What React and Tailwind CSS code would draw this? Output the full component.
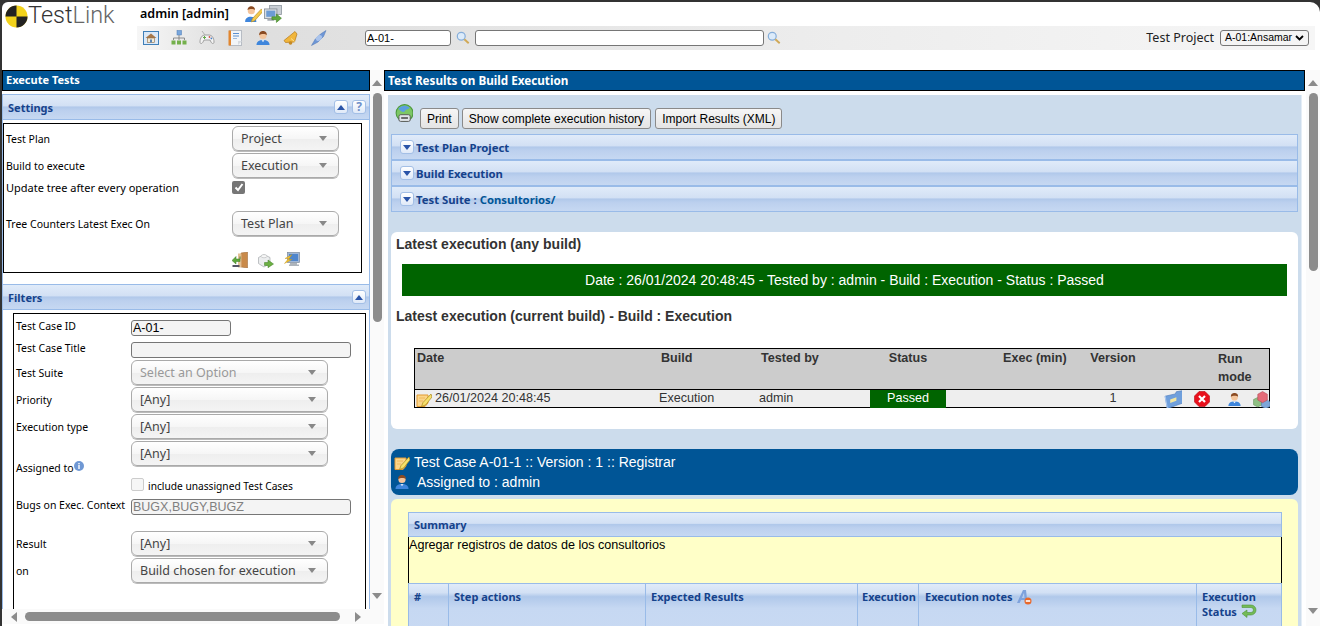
import React from "react";

const tahoma = "font-['Noto_Sans',sans-serif]";
const extBar =
  "border border-[#99bbe8] bg-[linear-gradient(to_bottom,#e0ebf9_0%,#d2e0f4_45%,#b0c8ea_50%,#bcd0ee_65%,#c6d8f2_100%)] text-[#15428b] font-bold";

// ---- icons, small pixel style drawings ----
const Svg = ({ s = 16, children, className = "" }) => (
  <svg width={s} height={s} viewBox="0 0 16 16" className={"shrink-0 " + className}>
    {children}
  </svg>
);

const HomeIcon = () => (
  <Svg>
    <rect x="0.5" y="1.5" width="15" height="13" fill="#dbe9f8" stroke="#3f7fb8" />
    <path d="M2.5 8 8 3.5 13.5 8z" fill="#a8794a" />
    <rect x="4.5" y="8" width="7" height="4.5" fill="#f3ead6" stroke="#8a6a45" strokeWidth="0.6" />
    <rect x="7" y="9.5" width="2" height="3" fill="#5b86b4" />
  </Svg>
);
const TreeIcon = () => (
  <Svg>
    <rect x="6" y="0.5" width="4.5" height="4.5" fill="#7aa7dc" stroke="#4a7ab5" strokeWidth="0.5" />
    <path d="M8 5v3M2.5 10V8h11v2M8 8v2" stroke="#777" fill="none" strokeWidth="0.8" />
    <rect x="0.5" y="10.5" width="4" height="4" fill="#74b04c" />
    <rect x="6" y="10.5" width="4" height="4" fill="#74b04c" />
    <rect x="11.5" y="10.5" width="4" height="4" fill="#74b04c" />
  </Svg>
);
const GamepadIcon = () => (
  <Svg>
    <path d="M1 12c0-4 2-7 5-7h4c3 0 5 3 5 7 0 2-2 2-3 0l-1-2H5l-1 2c-1 2-3 2-3 0z" fill="#f4f4f4" stroke="#8d8d8d" strokeWidth="0.8" />
    <path d="M4 7.5h3M5.5 6v3" stroke="#63a84a" strokeWidth="1" />
    <circle cx="10.5" cy="7" r="0.9" fill="#d9534f" />
    <circle cx="12.4" cy="8.4" r="0.9" fill="#4a7fc4" />
    <path d="M3 1l3 4" stroke="#b0b0b0" />
  </Svg>
);
const NotebookIcon = () => (
  <Svg>
    <rect x="2.5" y="0.5" width="12" height="15" fill="#f2f5f8" stroke="#b7bcc4" />
    <rect x="1.5" y="0.5" width="2.5" height="15" fill="#e2862f" />
    <path d="M6 3.5h6M6 6h6" stroke="#5b90d0" strokeWidth="1.2" />
    <path d="M6 8.5h4" stroke="#9fbbdc" />
    <path d="M15 11l-4 4v-4z" fill="#d7dbe0" />
  </Svg>
);
const UserIcon = ({ s = 16 }) => (
  <Svg s={s}>
    <path d="M1.5 15c0-3.5 2.5-5 6.5-5s6.5 1.5 6.500 5z" fill="#3f86dc" />
    <circle cx="8" cy="5.500" r="3.600" fill="#f4c59c" />
    <path d="M4.200 5.200C4 2 6 1 8 1s4 1 3.800 4.200C10.500 3.700 6 3.700 4.200 5.200z" fill="#8a4a22" />
    <path d="M6.500 10.200 8 12l1.500-1.800z" fill="#fff" />
  </Svg>
);
const BellIcon = () => (
  <Svg>
    <path d="M12 1.500 14 4 11.500 12 2.500 12.500 1 10.500 6.500 6z" fill="#f1b63c" stroke="#b67a1a" strokeWidth="0.7" />
    <path d="M8 8.500l3.500 3" stroke="#fbe39a" />
    <circle cx="7.500" cy="13" r="1.800" fill="#c68a26" />
  </Svg>
);
const ConnectorIcon = () => (
  <Svg>
    <path d="M0.500 15.500 4 9.500 9.500 4 15 0.500 12.500 6.500 7 12z" fill="#6f97d6" stroke="#4c74b5" strokeWidth="0.5" />
    <ellipse cx="8" cy="8" rx="3.400" ry="2.400" transform="rotate(-45 8 8)" fill="#a9c3ec" />
  </Svg>
);
const SearchIcon = () => (
  <Svg s={14}>
    <circle cx="6" cy="6" r="4.500" fill="#dcebfa" stroke="#86aeda" strokeWidth="1.400" />
    <path d="M9.500 9.500 14.500 14" stroke="#d0a957" strokeWidth="2.200" />
  </Svg>
);
const UserEditIcon = () => (
  <Svg s={18}>
    <path d="M1 15c0-3 2-4.500 5-4.500s5 1.500 5 4.500z" fill="#3f86dc" />
    <circle cx="6.500" cy="5" r="3.200" fill="#f4c59c" />
    <path d="M3.200 4.500C3 2 5 1 6.500 1s3.500 1 3.300 3.500C8.500 3.200 5 3.200 3.200 4.500z" fill="#8a4a22" />
    <path d="M15.500 3.500 7.500 12 6.500 15l3-1 7.500-8.500z" fill="#f2c94c" stroke="#b58a2a" strokeWidth="0.6" />
  </Svg>
);
const ComputerArrowIcon = () => (
  <Svg s={18}>
    <rect x="5" y="0.500" width="10.500" height="8" fill="#c9ced4" stroke="#8a929b" strokeWidth="0.7" />
    <rect x="0.500" y="3.500" width="11" height="8.500" fill="#d8dde2" stroke="#7f8790" strokeWidth="0.7" />
    <rect x="2" y="5" width="8" height="5.500" fill="#6c9bd4" />
    <rect x="3" y="12" width="6" height="2" fill="#a5abb2" />
    <path d="M7 10.500h4V8l4.500 3.700L11 15.500V13H7z" fill="#5fa83c" stroke="#3f7d25" strokeWidth="0.5" />
  </Svg>
);
const DoorIcon = () => (
  <Svg>
    <path d="M9 1 15.500 0v16L9 15z" fill="#c98a4a" stroke="#94602c" strokeWidth="0.5" />
    <rect x="6" y="1.500" width="3.500" height="14" fill="#e4c094" />
    <path d="M8 5v2.500H4V5L0 9l4 3.500V10h4z" transform="translate(0 -0.500)" fill="#5fa83c" stroke="#3f7d25" strokeWidth="0.5" />
    <rect x="0.500" y="13" width="7" height="2" fill="#556" />
  </Svg>
);
const LegoArrowIcon = () => (
  <Svg>
    <path d="M0.500 5.500 6 2.500l6 3v6l-6 3.500-5.500-3.500z" fill="#eceeef" stroke="#a6aaae" strokeWidth="0.7" />
    <ellipse cx="6" cy="4.200" rx="3" ry="1.600" fill="#f8f8f8" stroke="#b5b8bb" strokeWidth="0.6" />
    <path d="M6.500 10.500H10V8l5.500 4-5.500 3.700V13.500H6.500z" fill="#6cb043" stroke="#3f7d25" strokeWidth="0.5" />
  </Svg>
);
const MonitorBoltIcon = () => (
  <Svg>
    <rect x="3.500" y="0.500" width="12" height="10" fill="#9fb7d8" stroke="#7d8a9a" strokeWidth="0.7" />
    <rect x="5" y="2" width="9" height="7" fill="#4f86cc" />
    <path d="M6 11h7v1.500h2V14H5v-1.500h1z" fill="#adb4bb" />
    <path d="M8 2.500 1 6.500h3.500L0.500 11.500 8 7.500H4.500z" fill="#f2c12e" stroke="#c08f12" strokeWidth="0.4" />
  </Svg>
);
const GlobeIcon = () => (
  <Svg s={18}>
    <circle cx="8.500" cy="8" r="7.500" fill="#7cc765" stroke="#4d9a3d" />
    <path d="M3 4c3-3 7-3 10-1-1 2-3 1-4 3S5 7 3 4z" fill="#5b9fde" />
    <rect x="3.500" y="9.500" width="10" height="6" rx="1.500" fill="#dfe4e8" stroke="#555" strokeWidth="0.8" />
    <path d="M5.500 12.500h6" stroke="#444" strokeWidth="1.400" />
  </Svg>
);
const ExtBtn = ({ dir = "up", size = 14 }) => (
  <span
    style={{ width: size, height: size }}
    className="flex shrink-0 items-center justify-center rounded-[3px] border border-[#a3bfe6] bg-[linear-gradient(to_bottom,#ffffff,#dfe9f8)]"
  >
    <svg width="8" height="5" viewBox="0 0 8 5">
      <path d={dir === "up" ? "M0 5 4 0l4 5z" : "M0 0h8L4 5z"} fill="#2a54a8" />
    </svg>
  </span>
);
const InfoIcon = () => (
  <svg width="10" height="10" viewBox="0 0 10 10" className="mb-[5px] shrink-0">
    <circle cx="5" cy="5" r="5" fill="#6f98d4" />
    <rect x="4.300" y="4" width="1.400" height="4" fill="#fff" />
    <rect x="4.300" y="2" width="1.400" height="1.300" fill="#fff" />
  </svg>
);
const NoteEditIcon = ({ s = 16 }) => (
  <Svg s={s}>
    <path d="M1 4h11v8l-3 3.500H1z" fill="#fbd58a" stroke="#e29b33" />
    <path d="M3 7h6M3 10h4" stroke="#f0b85a" />
    <path d="M15 3 7 11.500 5.500 15.500 9.500 14 16 6z" fill="#f7e06a" stroke="#a8871c" strokeWidth="0.7" />
  </Svg>
);
const FolderIcon = () => (
  <Svg s={18}>
    <path d="M1 5.500 10 3.500 11 1.500 17 0.500 17 11.500 3 16.500z" fill="#6f9fdc" stroke="#4d7dbd" strokeWidth="0.6" />
    <path d="M5.500 8.500 11 6.500v3L5.500 11.500z" fill="#f2e6a0" />
    <path d="M1 5.500 3 16.500" stroke="#a8c6ee" />
  </Svg>
);
const RedXIcon = () => (
  <Svg>
    <path d="M5 0.500h6L15.500 5v6L11 15.500H5L0.500 11V5z" fill="#e8101c" stroke="#b80a12" strokeWidth="0.6" />
    <path d="M5 5l6 6M11 5l-6 6" stroke="#fff" strokeWidth="2.200" />
  </Svg>
);
const CubesIcon = () => (
  <Svg s={17}>
    <path d="M0.500 8 4.500 6l4 2v5l-4 2-4-2z" fill="#8fbf83" stroke="#5f8f57" strokeWidth="0.5" />
    <path d="M8 10l4-2 4 2v4.500l-4 2-4-2z" fill="#7ea6d8" stroke="#527cb0" strokeWidth="0.5" />
    <path d="M4.500 3 9 0.500 13.500 3v5.500L9 11 4.500 8.500z" fill="#e46b78" stroke="#b0444f" strokeWidth="0.5" />
  </Svg>
);
const ItalicMinusIcon = () => (
  <Svg>
    <path d="M1 14 7 1h3l1.500 13H9l-.3-3H5l-1.300 3zM5.800 9h2.700L8 4z" fill="#7ea2dc" />
    <circle cx="12" cy="12" r="3.500" fill="#e8682a" />
    <rect x="9.800" y="11.200" width="4.400" height="1.600" fill="#fff" />
  </Svg>
);
const ReturnIcon = () => (
  <Svg>
    <path d="M1 2h9a4.500 4.500 0 0 1 0 10H6v2.500L1 10.500 6 7v2.500h4a2 2 0 0 0 0-5H1z" fill="#74bb57" stroke="#4d9437" strokeWidth="0.6" />
  </Svg>
);
const LogoIcon = () => (
  <svg width="23" height="23" viewBox="0 0 24 24" className="shrink-0">
    <circle cx="12" cy="12" r="11.500" fill="#f2d21b" />
    <path d="M12 .5A11.500 11.500 0 0 0 .5 12H12zM12 12v11.500A11.500 11.500 0 0 0 23.500 12z" fill="#222" />
  </svg>
);

// ---- form bits ----
const Chosen = ({ w, label, disabled, className = "" }) => (
  <div
    style={{ width: w }}
    className={
      "flex h-[25px] shrink-0 items-center justify-between rounded-[6px] border border-[#aaaaaa] bg-[linear-gradient(to_bottom,#ffffff_0%,#f6f6f6_50%,#eeeeee_52%,#f4f4f4_100%)] pl-[8px] pr-[11px] text-[12.500px] shadow-[0_1px_0_#bbb] " +
      tahoma + " " + (disabled ? "text-[#999999] " : "text-[#444444] ") + className
    }
  >
    <span className="whitespace-nowrap pt-[1px]">{label}</span>
    <svg width="8" height="5" viewBox="0 0 8 5">
      <path d="M0 0h8L4 5z" fill="#888" />
    </svg>
  </div>
);
const TextBox = ({ w, value, muted, className = "" }) => (
  <div
    style={{ width: w }}
    className={
      "h-[16px] shrink-0 rounded-[3px] border border-[#767676] bg-[#f4f4f4] pl-[1px] font-['Liberation_Sans',sans-serif] leading-[14px] " +
      (muted ? "text-[#808080] " : "text-black ") + className
    }
  >
    {value}
  </div>
);
const Row = ({ label, children, className = "", labelClass = "pt-[2px]", w = 118 }) => (
  <div className={"flex items-center " + className}>
    <div style={{ width: w }} className={"flex shrink-0 items-end whitespace-nowrap " + labelClass}>
      {label}
    </div>
    {children}
  </div>
);
const Btn = ({ children, className = "" }) => (
  <button className={"h-[21px] rounded-[3px] border border-[#8a8a8a] bg-[linear-gradient(to_bottom,#f6f6f6,#e4e4e4)] px-[6px] text-[12px] leading-[18px] text-black " + className}>
    {children}
  </button>
);
const Arrow = ({ dir }) => {
  const d = { up: "M0 6 5 0l5 6z", down: "M0 0h10L5 6z", left: "M6 0v10L0 5z", right: "M0 0v10l6-5z" }[dir];
  const box = dir === "up" || dir === "down" ? [10, 6] : [6, 10];
  return (
    <svg width={box[0]} height={box[1]} viewBox={`0 0 ${box[0]} ${box[1]}`} className="shrink-0">
      <path d={d} fill="#8c8c8c" />
    </svg>
  );
};
const VScroll = ({ thumb, downAt }) => (
  <div className="flex h-full w-[14px] shrink-0 flex-col items-center bg-[#fafafa]">
    <div className="mt-[10px]"><Arrow dir="up" /></div>
    <div style={{ height: thumb }} className="mt-[7px] w-[9px] shrink-0 rounded-[5px] bg-[#8c8c8c]" />
    <div style={{ marginTop: downAt }}><Arrow dir="down" /></div>
  </div>
);
const Accordion = ({ children }) => (
  <div className={"flex h-[26px] items-center gap-[2px] pl-[8px] text-[11.300px] " + extBar + " " + tahoma}>
    <ExtBtn dir="down" />
    <span className="pt-[3px]">{children}</span>
  </div>
);
const StepHead = ({ w, children, className = "" }) => (
  <div style={{ width: w }} className={"shrink-0 border-r border-[#99bbe8] pl-[5px] pt-[5px] " + className}>
    {children}
  </div>
);

const tableCols = "grid grid-cols-[244px_100px_111px_76px_134px_66px_70px_53px]";

export default function App() {
  return (
    <div className="h-[626px] w-[1320px] overflow-hidden bg-[#333333] pl-[2px] pt-[2px]">
      <div className="flex h-[624px] flex-col overflow-hidden rounded-tl-[6px] rounded-tr-[10px] bg-white">
        {/* top header */}
        <header className="flex h-[68px] shrink-0">
          <div className="flex h-[25px] w-[135px] shrink-0 items-center pl-[3px] pt-[3px]">
            <LogoIcon />
            <span className="whitespace-nowrap font-['Roboto',sans-serif] text-[23.500px] font-light leading-none text-[#333333]">
              Test<span className="text-[#666666]">Link</span>
            </span>
          </div>
          <div className="flex flex-col">
            <div className={"flex h-[24px] items-center pl-[3px] " + tahoma}>
              <span className="w-[104px] text-[12.500px] font-semibold text-black">admin [admin]</span>
              <UserEditIcon />
              <span className="ml-[2px]"><ComputerArrowIcon /></span>
            </div>
            <div className="flex h-[24px] w-[1178px] items-center bg-[linear-gradient(to_right,#f6f6f6,#dedede_8%,#ededed_60%,#f6f6f6)] pl-[6px]">
              <div className="flex gap-[12px]">
                <HomeIcon /><TreeIcon /><GamepadIcon /><NotebookIcon /><UserIcon /><BellIcon /><ConnectorIcon />
              </div>
              <TextBox w={86} value="A-01-" className="ml-[38px] bg-white text-[11px]" />
              <span className="ml-[5px]"><SearchIcon /></span>
              <TextBox w={289} value="" className="ml-[5px] bg-white" />
              <span className="ml-[3px]"><SearchIcon /></span>
              <span className={"ml-auto text-[12.500px] text-[#222222] " + tahoma}>Test Project</span>
              <div className="ml-[6px] mr-[6px] flex h-[16px] w-[89px] items-center justify-between whitespace-nowrap rounded-[3px] border border-[#767676] bg-[#f4f4f4] px-[4px] font-['Liberation_Sans',sans-serif] text-[10.500px] text-black">
                <span>A-01:Ansamar</span>
                <svg width="9" height="6" viewBox="0 0 9 6" className="shrink-0">
                  <path d="M1 1l3.500 3.500L8 1" fill="none" stroke="#000" strokeWidth="1.800" />
                </svg>
              </div>
            </div>
          </div>
        </header>

        <div className="flex min-h-0 flex-1">
          {/* left pane */}
          <aside className="flex w-[382px] shrink-0 flex-col">
            <div className="flex h-[539px] shrink-0">
              <div className={"flex w-[368px] shrink-0 flex-col overflow-hidden text-[10.500px] text-black " + tahoma}>
                <div className="flex h-[21px] shrink-0 items-center border border-black bg-[#005596] pl-[3px] text-[11px] font-bold text-white">
                  Execute Tests
                </div>
                <div className={"mt-[3px] flex h-[26px] shrink-0 items-center justify-between pl-[5px] pr-[3px] text-[11px] " + extBar}>
                  <span className="pt-[3px]">Settings</span>
                  <span className="flex gap-[4px]">
                    <ExtBtn dir="up" />
                    <span className="flex h-[14px] w-[14px] items-center justify-center rounded-[3px] border border-[#a3bfe6] bg-[linear-gradient(to_bottom,#ffffff,#dfe9f8)] text-[12px] font-bold leading-none text-[#6f8fc8]">?</span>
                  </span>
                </div>
                {/* settings body */}
                <div className="h-[164px] shrink-0 border-x border-[#99bbe8] pt-[3px]">
                  <div className="flex h-[150px] w-[359px] flex-col border border-black pl-[2px]">
                    <Row label="Test Plan" w={226} className="mt-[2px]"><Chosen w={107} label="Project" /></Row>
                    <Row label="Build to execute" w={226} className="mt-[2px]"><Chosen w={107} label="Execution" /></Row>
                    <Row label={<span className="text-[11px]">Update tree after every operation</span>} labelClass="pt-[3px]" w={226} className="mt-[2px] h-[14px]">
                      <span className="flex h-[13px] w-[13px] items-center justify-center rounded-[2px] bg-[#767676]">
                        <svg width="10" height="10" viewBox="0 0 10 10">
                          <path d="M1.500 5.500 4 8l4.500-6" fill="none" stroke="#fff" strokeWidth="2" />
                        </svg>
                      </span>
                    </Row>
                    <Row label="Tree Counters Latest Exec On" w={226} className="mt-[17px]"><Chosen w={107} label="Test Plan" /></Row>
                    <div className="ml-[226px] mt-[16px] flex gap-[10px]">
                      <DoorIcon /><LegoArrowIcon /><MonitorBoltIcon />
                    </div>
                  </div>
                </div>
                <div className={"flex h-[26px] shrink-0 items-center justify-between pl-[5px] pr-[3px] text-[11px] " + extBar}>
                  <span className="pt-[3px]">Filters</span>
                  <ExtBtn dir="up" />
                </div>
                {/* filters body */}
                <div className="min-h-0 flex-1 border-x border-[#99bbe8] pt-[3px]">
                  <div className="ml-[10px] h-[400px] w-[353px] border border-black pl-[2px]">
                    <Row label="Test Case ID" labelClass="pb-[3px]" w={115} className="mt-[6px] h-[16px]"><TextBox w={100} value="A-01-" className="text-[12.500px]" /></Row>
                    <Row label="Test Case Title" labelClass="pb-[3px]" w={115} className="mt-[6px] h-[16px]"><TextBox w={220} value="" /></Row>
                    <Row label="Test Suite" w={115} className="mt-[2px]"><Chosen w={197} label="Select an Option" disabled /></Row>
                    <Row label="Priority" w={115} className="mt-[2px]"><Chosen w={197} label="[Any]" /></Row>
                    <Row label="Execution type" w={115} className="mt-[2px]"><Chosen w={197} label="[Any]" /></Row>
                    <Row label={<>Assigned to<InfoIcon /></>} labelClass="translate-y-[15px]" w={115} className="mt-[2px]">
                      <Chosen w={197} label="[Any]" />
                    </Row>
                    <div className="ml-[115px] mt-[12px] flex h-[13px] items-center gap-[4px]">
                      <span className="h-[13px] w-[13px] rounded-[2px] border border-[#cccccc] bg-[#f6f6f6]" />
                      <span className="pt-[5px] text-[10.200px]">include unassigned Test Cases</span>
                    </div>
                    <Row label="Bugs on Exec. Context" labelClass="pb-[3px]" w={115} className="mt-[8px] h-[16px]"><TextBox w={220} value="BUGX,BUGY,BUGZ" muted className="text-[12.500px]" /></Row>
                    <Row label="Result" w={115} className="mt-[16px]"><Chosen w={197} label="[Any]" /></Row>
                    <Row label="on" w={115} className="mt-[2px]"><Chosen w={197} label="Build chosen for execution" /></Row>
                  </div>
                </div>
              </div>
              <VScroll thumb={229} downAt={271} />
            </div>
            <div className="flex h-[15px] shrink-0 items-center bg-[#fafafa]">
              <span className="ml-[9px]"><Arrow dir="left" /></span>
              <div className="ml-[8px] h-[9px] w-[315px] rounded-[5px] bg-[#8c8c8c]" />
              <span className="ml-[15px]"><Arrow dir="right" /></span>
            </div>
          </aside>

          {/* right pane */}
          <main className="flex min-w-0 flex-1">
            <div className="flex w-[922px] shrink-0 flex-col overflow-hidden font-['Liberation_Sans',sans-serif]">
              <div className={"mr-[1px] flex h-[21px] shrink-0 items-center border border-black bg-[#005596] pl-[3px] text-[11.700px] font-bold text-white " + tahoma}>
                Test Results on Build Execution
              </div>
              <div className="mt-[4px] ml-[4px] w-[914px] flex-1 border-r border-[#e4edf6] bg-[#ccdcec] px-[3px] pt-[9px]">
                <div className="flex h-[30px] items-start pl-[4px]">
                  <GlobeIcon />
                  <div className="ml-[7px] mt-[4px] flex gap-[3px]">
                    <Btn>Print</Btn>
                    <Btn>Show complete execution history</Btn>
                    <Btn className="ml-[1px]">Import Results (XML)</Btn>
                  </div>
                </div>
                <Accordion>Test Plan Project</Accordion>
                <Accordion>Build Execution</Accordion>
                <Accordion>
                  Test Suite : <span className="text-[#005596]">Consultorios/</span>
                </Accordion>

                {/* latest execution card */}
                <section className="mt-[20px] h-[197px] rounded-[6px] bg-white px-[5px] pt-[3px] text-[#333333]">
                  <h2 className="h-[25px] text-[14px] font-bold leading-[18px]">Latest execution (any build)</h2>
                  <div className="ml-[6px] mt-[4px] flex h-[32px] w-[885px] items-center justify-center bg-[#006400] text-[14px] text-white">
                    Date : 26/01/2024 20:48:45 - Tested by : admin - Build : Execution - Status : Passed
                  </div>
                  <h2 className="mt-[11px] text-[14px] font-bold leading-[18px]">Latest execution (current build) - Build : Execution</h2>
                  <div className="ml-[18px] mt-[23px] w-[856px] border border-black text-[12.600px]">
                    <div className={tableCols + " h-[41px] border-b border-black bg-[#cccccc] pt-[1px] font-bold leading-[16px]"}>
                      <span className="pl-[2px]">Date</span>
                      <span className="pl-[2px]">Build</span>
                      <span className="pl-[2px]">Tested by</span>
                      <span className="text-center">Status</span>
                      <span className="pl-[57px]">Exec (min)</span>
                      <span className="text-center">Version</span>
                      <span />
                      <span className="pl-[2px] leading-[18px]">Run<br />mode</span>
                    </div>
                    <div className={tableCols + " h-[17px] items-center bg-[#eeeeee] leading-[16px]"}>
                      <span className="flex items-center gap-[3px] pl-[1px]"><NoteEditIcon /><span className="-mt-[2px]">26/01/2024 20:48:45</span></span>
                      <span className="pb-[2px]">Execution</span>
                      <span className="pb-[2px]">admin</span>
                      <span className="flex h-full items-center justify-center bg-[#006400] pb-[2px] text-white">Passed</span>
                      <span />
                      <span className="pb-[2px] text-center">1</span>
                      <span className="flex items-center gap-[12px] pl-[18px]"><FolderIcon /><RedXIcon /></span>
                      <span className="flex items-center gap-[11px] pl-[11px]"><UserIcon s={15} /><CubesIcon /></span>
                    </div>
                  </div>
                </section>

                {/* test case */}
                <section className="mt-[20px] flex h-[46px] flex-col justify-center rounded-[8px] bg-[#005596] pl-[3px] text-[14px] leading-[20px] text-white">
                  <div className="flex items-center gap-[4px]"><NoteEditIcon />Test Case A-01-1 :: Version : 1 :: Registrar</div>
                  <div className="flex items-center gap-[7px]"><UserIcon />Assigned to : admin</div>
                </section>
                <section className="mt-[4px] rounded-t-[6px] bg-[#ffffc8] pb-[40px] pl-[17px] pr-[16px] pt-[13px]">
                  <div className={"flex h-[25px] items-center pl-[5px] text-[11px] " + extBar + " " + tahoma}>
                    <span className="pt-[1px]">Summary</span>
                  </div>
                  <div className="h-[46px] border-x border-black pt-[1px] text-[12.600px] leading-[14px] text-black">
                    Agregar registros de datos de los consultorios
                  </div>
                  <div className={"flex h-[60px] border border-[#99bbe8] bg-[linear-gradient(to_bottom,#e0ebf9_0%,#d2e0f4_15%,#b0c8ea_22%,#c6d8f2_42%,#c9daf3_100%)] text-[11px] font-bold leading-[15px] text-[#15428b] " + tahoma}>
                    <StepHead w={40}>#</StepHead>
                    <StepHead w={197}>Step actions</StepHead>
                    <StepHead w={212}>Expected Results</StepHead>
                    <StepHead w={61} className="!pl-[4px]">Execution</StepHead>
                    <StepHead w={278} className="flex items-start gap-[3px] !pl-[6px]">Execution notes <ItalicMinusIcon /></StepHead>
                    <div className="pl-[5px] pt-[5px]">
                      Execution<br />
                      <span className="-mt-[1px] flex items-center gap-[4px]">Status <ReturnIcon /></span>
                    </div>
                  </div>
                </section>
              </div>
            </div>
            <VScroll thumb={178} downAt={337} />
          </main>
        </div>
      </div>
    </div>
  );
}
